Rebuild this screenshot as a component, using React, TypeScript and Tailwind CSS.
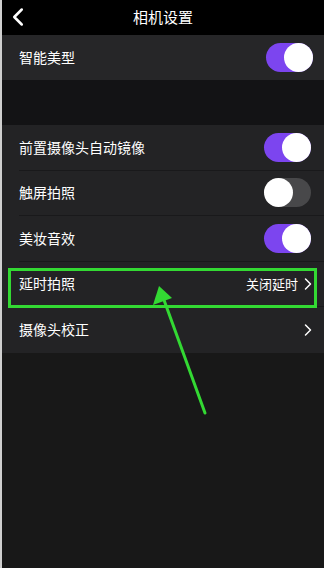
import { ChevronLeft, ChevronRight } from 'lucide-react'

const font = { fontFamily: '"Noto Sans CJK SC", "Noto Sans", sans-serif' }

function Toggle({ on }: { on: boolean }) {
  return (
    <div
      className={`w-[47px] h-[29px] rounded-full flex items-center ${
        on ? 'bg-[#7c45ef] justify-end' : 'bg-[#48484a] justify-start'
      }`}
    >
      <div className="w-[29px] h-[29px] rounded-full bg-white" />
    </div>
  )
}

function Row({
  label,
  right,
  divider = true,
}: {
  label: string
  right: React.ReactNode
  divider?: boolean
}) {
  return (
    <div className="h-[45.5px] pl-[19px] bg-[#232325]">
      <div
        className={`h-full flex items-center justify-between pr-[13px] ${
          divider ? 'border-b border-[#19191b]' : ''
        }`}
      >
        <span className="text-[14px] text-white">{label}</span>
        {right}
      </div>
    </div>
  )
}

export default function App() {
  return (
    <div className="relative w-[324px] h-[568px] bg-[#181818] overflow-hidden border-l-2 border-[#cfcfcf]" style={font}>
      {/* Header */}
      <header className="h-[35px] bg-black flex items-center justify-center relative">
        <ChevronLeft className="absolute left-[1px] top-[2px] w-[30px] h-[30px] text-white" strokeWidth={2} />
        <h1 className="text-[15px] text-white">相机设置</h1>
      </header>

      <div className="h-[45px] pl-[17px] pr-[11px] bg-[#262628] flex items-center justify-between">
        <span className="text-[14px] text-white">智能美型</span>
        <Toggle on />
      </div>

      <div className="h-[45px] bg-[#131315]" />

      <div className="-ml-[2px]">
        <Row label="前置摄像头自动镜像" right={<Toggle on />} />
        <Row label="触屏拍照" right={<Toggle on={false} />} />
        <Row label="美妆音效" right={<Toggle on />} />
        <Row
          label="延时拍照"
          right={
            <span className="flex items-center text-[13px] text-white">
              关闭延时
              <ChevronRight className="w-[20px] h-[20px] -mr-[7px]" strokeWidth={1.8} />
            </span>
          }
        />
        <Row
          label="摄像头校正"
          divider={false}
          right={<ChevronRight className="w-[20px] h-[20px] -mr-[7px] text-white" strokeWidth={1.8} />}
        />
      </div>

      {/* Annotation */}
      <div className="absolute left-[6px] top-[268px] w-[309px] h-[40px] border-[3px] border-[#33d933]" />
      <svg className="absolute left-0 top-0" width="324" height="568" viewBox="0 0 324 568">
        <line x1="203" y1="413" x2="162" y2="300" stroke="#33d933" strokeWidth="3" strokeLinecap="round" />
        <polygon points="157,286 151,305 170,298" fill="#33d933" />
      </svg>
    </div>
  )
}
